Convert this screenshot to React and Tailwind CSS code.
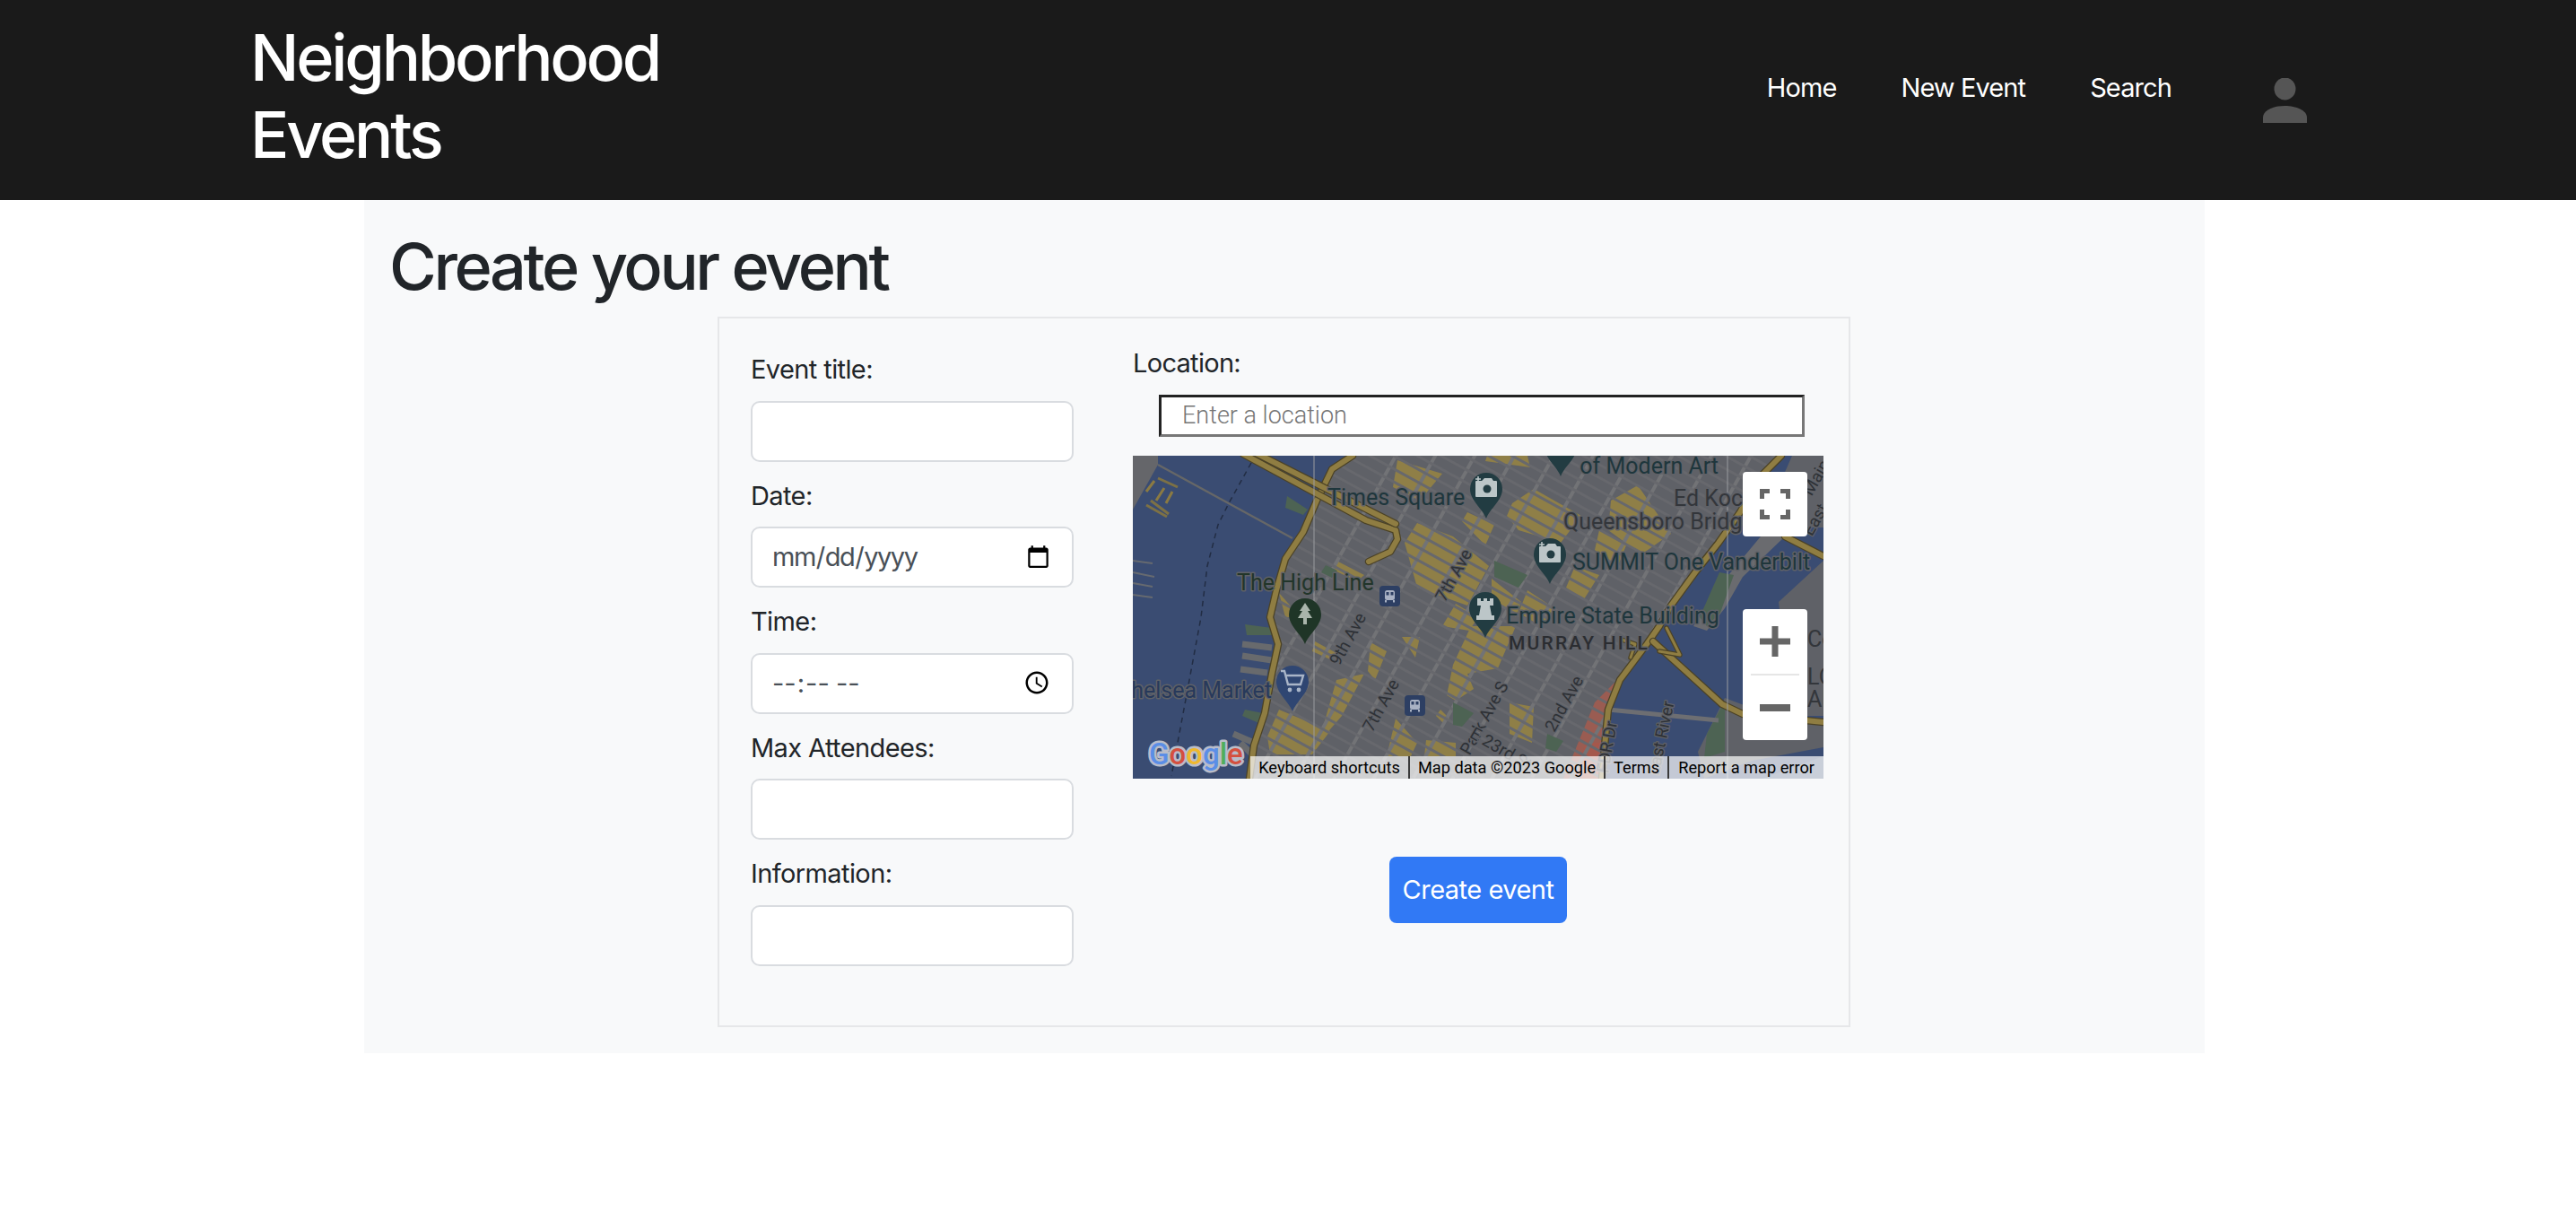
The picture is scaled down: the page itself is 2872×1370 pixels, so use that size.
import React from "react";

const land = "#5f6167";
const water = "#3a4c72";

const manhattan =
  "M245 0 L222 15 L205 50 L190 85 L170 115 L160 150 L153 180 L162 210 L155 243 L147 287 L135 323 L130 360 L520 360 L527 313 L530 283 L543 250 L573 210 L587 190 L600 167 L627 130 L653 97 L677 63 L700 23 L723 0 Z";

const yellowBlocks = [
  "303,97 317,75 357,90 397,123 373,167 317,147",
  "373,63 403,77 393,100 367,73",
  "447,37 500,67 477,97 430,83 417,67 423,53",
  "400,137 433,163 427,180 400,160",
  "393,6 443,13 440,0 395,0",
  "533,50 563,33 600,87 567,110 530,83",
  "520,83 550,100 540,125 515,105",
  "493,123 520,133 503,160 483,147",
  "357,233 377,190 427,190 407,237 373,243 380,260 360,273 350,267",
  "300,202 320,202 315,225",
  "265,208 283,218 270,250 262,240",
  "343,283 353,293 346,298 338,290",
  "293,293 317,320 310,335 283,335",
  "327,317 360,320 360,335 325,335",
  "420,275 447,280 445,320 420,310",
  "163,283 220,307 200,333 153,333 150,313",
  "203,207 227,220 222,228 200,218",
  "227,250 258,243 233,290 207,320",
  "227,117 258,133 250,140 225,128",
  "163,153 187,180 170,180",
  "295,5 345,20 320,50 290,35",
  "440,150 470,170 455,190 430,175",
  "345,190 360,165 385,180 375,195",
];

const greenPatches = [
  "172,45 195,60 190,66 170,58",
  "125,188 155,192 155,200 127,200",
  "125,283 150,288 145,300 122,290",
  "654,130 670,133 655,175 640,190 632,180",
  "660,273 640,310 637,337 660,330",
];

const parkPatches = [
  "403,117 440,133 430,147 403,135",
  "357,275 380,287 367,302 357,300",
  "462,310 480,318 472,330 460,326",
  "215,122 228,128 222,136 210,130",
];

const waterPiers = [
  [122, 210, 155, 214],
  [122, 223, 155, 228],
  [120, 238, 150, 242],
  [112, 310, 135, 320],
  [135, 335, 120, 320],
];

function Streets() {
  const lines = [];
  // avenues run up to the right, streets cross them
  for (let i = 0; i < 14; i++) {
    const x = 70 + i * 44;
    lines.push(<line key={"a" + i} x1={x} y1={400} x2={x + 240} y2={-30} stroke="#727376" strokeWidth="4" />);
  }
  for (let i = 0; i < 80; i++) {
    const y = -420 + i * 14.5;
    lines.push(<line key={"s" + i} x1={80} y1={y} x2={800} y2={y + 395} stroke="#67686d" strokeWidth="3" />);
  }
  return <g>{lines}</g>;
}

function Road({ d, w = 6 }) {
  return (
    <g fill="none" strokeLinejoin="round" strokeLinecap="round">
      <path d={d} stroke="#4b4226" strokeWidth={w + 2.5} />
      <path d={d} stroke="#8f7d42" strokeWidth={w} />
    </g>
  );
}

function Pin({ x, y, fill, children }) {
  return (
    <g transform={`translate(${x} ${y})`}>
      <path d="M0 33 C-4 22 -18 13 -18 0 A18 18 0 1 1 18 0 C18 13 4 22 0 33 Z" fill={fill} />
      {children}
    </g>
  );
}

function CameraGlyph() {
  return (
    <g>
      <path d="M-11 -9 H-5 L-2 -12 H6 L8 -9 H11 A1 1 0 0 1 12 -8 V8 A1 1 0 0 1 11 9 H-11 A1 1 0 0 1 -12 8 V-8 A1 1 0 0 1 -11 -9 Z" fill="#bcc6c8" />
      <circle cx="1" cy="0" r="4.5" fill="#223c42" />
      <path d="M-9 -14 V-8 M-12 -11 H-6" stroke="#bcc6c8" strokeWidth="1.6" />
    </g>
  );
}

function TransitBadge({ x, y }) {
  return (
    <g transform={`translate(${x} ${y})`}>
      <rect width="23" height="23" rx="4" fill="#2d3f63" />
      <rect x="6" y="5" width="11" height="11" rx="2.5" fill="#a9b2c4" />
      <rect x="7.5" y="7" width="3" height="3.5" fill="#2d3f63" />
      <rect x="12.5" y="7" width="3" height="3.5" fill="#2d3f63" />
      <path d="M7 16 V18.5 M16 16 V18.5" stroke="#a9b2c4" strokeWidth="2" />
    </g>
  );
}

function MapLabel({ x, y, children, fill = "#1e363c", size = 25, weight = 400, anchor = "start", spacing }) {
  return (
    <text
      x={x}
      y={y}
      fill={fill}
      fontSize={size}
      fontWeight={weight}
      fontFamily="Roboto, sans-serif"
      textAnchor={anchor}
      letterSpacing={spacing}
      stroke={land}
      strokeWidth="3"
      strokeLinejoin="round"
      paintOrder="stroke"
    >
      {children}
    </text>
  );
}

function RoadLabel({ x, y, angle, children, size = 19 }) {
  return (
    <text
      transform={`translate(${x} ${y}) rotate(${angle})`}
      fill="#2e3136"
      fontSize={size}
      fontFamily="Roboto, sans-serif"
      textAnchor="middle"
      dominantBaseline="middle"
      stroke={land}
      strokeWidth="2.5"
      strokeLinejoin="round"
      paintOrder="stroke"
    >
      {children}
    </text>
  );
}

function MapDrawing() {
  return (
    <svg className="block h-full w-full" viewBox="0 0 770 360">
      <defs>
        <clipPath id="island">
          <path d={manhattan} />
        </clipPath>
      </defs>
      <rect width="770" height="360" fill={water} />

      {/* far shore and the other islands */}
      <polygon points="0,0 28,0 28,10 0,60" fill="#65666a" />
      <polygon points="700,90 727,90 680,135 660,170 640,195 625,190 650,150" fill="#6a6b6f" />
      <polygon points="770,117 720,163 723,190 770,190" fill={land} />
      <polygon points="735,0 770,0 770,80 700,80" fill={land} />
      <polygon points="660,270 700,285 770,295 770,325 690,340 637,360 630,330" fill={land} />
      <polygon points="680,190 770,190 770,290 680,290" fill={land} />
      <polygon points="702,360 770,335 770,360" fill="#4c5f80" />
      {greenPatches.map((p) => (
        <polygon key={p} points={p} fill="#4d6353" />
      ))}
      {waterPiers.map(([x1, y1, x2, y2]) => (
        <line key={x1 + "-" + y1} x1={x1} y1={y1} x2={x2} y2={y2} stroke="#686a6d" strokeWidth="7" />
      ))}
      <path d="M28 25 L50 35 M20 50 L40 65 M15 55 L38 68" stroke="#7d7145" strokeWidth="3" />
      <path d="M15 40 L24 28 M26 50 L35 36 M37 53 L44 40" stroke="#8b7a42" strokeWidth="3" />
      <path d="M0 117 L22 120 M0 130 L24 135 M0 142 L22 146 M0 155 L22 158" stroke="#666a70" strokeWidth="2" />

      <line x1="28" y1="10" x2="178" y2="92" stroke="#666767" strokeWidth="2.5" />
      <path d="M132 8 L107 53 L95 77 L83 123 L76 180 L58 277 L43 357" fill="none" stroke="#222d44" strokeWidth="1.5" strokeDasharray="6 5" />
      <path d="M530 283 L653 295" stroke="#6d6e72" strokeWidth="5" />

      {/* Manhattan */}
      <path d={manhattan} fill={land} />
      <g clipPath="url(#island)">
        {yellowBlocks.map((p) => (
          <polygon key={p} points={p} fill="#8f7f47" />
        ))}
        <polygon points="515,275 540,250 520,360 480,360" fill="#9a5c52" />
        <polygon points="505,320 525,320 520,360 490,360" fill="#a5584c" />
        <Streets />
        {parkPatches.map((p) => (
          <polygon key={p} points={p} fill="#4d6353" />
        ))}
      </g>

      {/* highways */}
      <Road d="M245 0 L222 15 L205 50 L190 85 L170 115 L160 150 L153 180 L162 210 L155 243 L147 287 L135 323 L130 360" />
      <Road d="M723 0 L700 23 L677 63 L653 97 L627 130 L600 167 L587 190 L573 210 L543 250 L530 283 L527 313 L523 360" />
      <Road d="M123 -2 L260 72 L293 83 L295 93 L287 107 L263 118" w={6} />
      <Road d="M135 -4 L293 76" w={6} />
      <Road d="M580 207 L657 277 L680 288 L770 297" />
      <Road d="M727 90 L770 112" />
      <Road d="M545 205 L560 210 L555 225 M587 218 L610 222 L595 192" w={3} />

      {/* thin seams in the tiles */}
      <line x1="202" y1="0" x2="202" y2="360" stroke="#9a9ca0" strokeWidth="1" />
      <line x1="663" y1="0" x2="663" y2="360" stroke="#9a9ca0" strokeWidth="1" />

      <MapLabel x={217} y={55}>Times Square</MapLabel>
      <MapLabel x={653} y={20} anchor="end">of Modern Art</MapLabel>
      <MapLabel x={603} y={56} fill="#33363b">Ed Koch</MapLabel>
      <MapLabel x={480} y={82} fill="#33363b">Queensboro Bridge</MapLabel>
      <MapLabel x={490} y={127}>SUMMIT One Vanderbilt</MapLabel>
      <MapLabel x={116} y={150} fill="#22352a">The High Line</MapLabel>
      <MapLabel x={416} y={187}>Empire State Building</MapLabel>
      <MapLabel x={419} y={216} fill="#2b2d31" size={21} weight={500} spacing="2.2">MURRAY HILL</MapLabel>
      <MapLabel x={155} y={270} fill="#27395b" anchor="end">Chelsea Market</MapLabel>

      <RoadLabel x={241} y={205} angle={-61}>9th Ave</RoadLabel>
      <RoadLabel x={359} y={134} angle={-61}>7th Ave</RoadLabel>
      <RoadLabel x={278} y={279} angle={-61}>7th Ave</RoadLabel>
      <RoadLabel x={393} y={293} angle={-61}>Park Ave S</RoadLabel>
      <RoadLabel x={482} y={277} angle={-61}>2nd Ave</RoadLabel>
      <RoadLabel x={410} y={328} angle={30}>E 23rd St</RoadLabel>
      <RoadLabel x={530} y={325} angle={-80}>FDR Dr</RoadLabel>
      <RoadLabel x={590} y={315} angle={-78}>East River</RoadLabel>
      <RoadLabel x={763} y={25} angle={-60}>Main</RoadLabel>
      <RoadLabel x={762} y={72} angle={-60}>East</RoadLabel>
      <MapLabel x={752} y={213} fill="#33363b">Co</MapLabel>
      <MapLabel x={752} y={255} fill="#33363b">LO</MapLabel>
      <MapLabel x={752} y={280} fill="#33363b">AM</MapLabel>

      <Pin x={394} y={37} fill="#223c42"><CameraGlyph /></Pin>
      <Pin x={465} y={110} fill="#223c42"><CameraGlyph /></Pin>
      <Pin x={477} y={-10} fill="#223c42" />
      <Pin x={393} y={170} fill="#223c42">
        <path d="M-9 -11 H-5 V-8 H-2 V-11 H2 V-8 H5 V-11 H9 V-3 H5 L7 8 H10 V13 H-10 V8 H-7 L-5 -3 H-9 Z" fill="#bcc6c8" />
      </Pin>
      <Pin x={192} y={177} fill="#1f3527">
        <path d="M0 -13 L6 -4 H3 L8 4 H2 V11 H-2 V4 H-8 L-3 -4 H-6 Z" fill="#a9b5ab" />
      </Pin>
      <Pin x={178} y={252} fill="#2f4672">
        <path d="M-13 -12 H-9 L-5 3 H9 L12 -7 H-7" fill="none" stroke="#a9b5c8" strokeWidth="2.4" />
        <circle cx="-3" cy="9" r="2.4" fill="#a9b5c8" />
        <circle cx="7" cy="9" r="2.4" fill="#a9b5c8" />
      </Pin>
      <TransitBadge x={275} y={145} />
      <TransitBadge x={303} y={267} />

      {/* Google logo */}
      <text
        x="18"
        y="344"
        fontFamily="Roboto, sans-serif"
        fontSize="33"
        fontWeight="500"
        stroke="#b9bdc9"
        strokeWidth="5"
        strokeLinejoin="round"
        paintOrder="stroke"
      >
        <tspan fill="#5b8ee6">G</tspan>
        <tspan fill="#d4503f">o</tspan>
        <tspan fill="#efb82e">o</tspan>
        <tspan fill="#5b8ee6">g</tspan>
        <tspan fill="#4fae5c">l</tspan>
        <tspan fill="#d4503f">e</tspan>
      </text>
    </svg>
  );
}

function Field({ label, type = "text", tracking = "" }) {
  return (
    <div className="mb-4 flex flex-col">
      <label className="leading-[43.5px] tracking-[-0.6px]">{label}</label>
      <input
        type={type}
        className={
          "mt-[13px] h-[68px] w-[360px] rounded-[10px] border-2 border-[#d9dce0] bg-white px-[21px] text-[29px] text-[#495057] " +
          tracking
        }
      />
    </div>
  );
}

function MapControls() {
  return (
    <>
      <button type="button" className="absolute top-[18px] right-[18px] grid h-[72px] w-[72px] place-items-center rounded-[4px] bg-white">
        <svg width="34" height="34" viewBox="0 0 34 34" fill="none" stroke="#666" strokeWidth="5">
          <path d="M2.5 11 V2.5 H11 M23 2.5 H31.5 V11 M31.5 23 V31.5 H23 M11 31.5 H2.5 V23" />
        </svg>
      </button>
      <div className="absolute top-[171px] right-[18px] flex w-[72px] flex-col items-center rounded-[4px] bg-white">
        <button type="button" className="grid h-[72px] w-full place-items-center">
          <svg width="34" height="34" viewBox="0 0 34 34" fill="#666">
            <path d="M13.5 0 H20.5 V13.5 H34 V20.5 H20.5 V34 H13.5 V20.5 H0 V13.5 H13.5 Z" />
          </svg>
        </button>
        <div className="h-[2px] w-[54px] bg-[#e6e6e6]" />
        <button type="button" className="grid h-[72px] w-full place-items-center">
          <svg width="34" height="8" viewBox="0 0 34 8" fill="#666">
            <rect width="34" height="8" />
          </svg>
        </button>
      </div>
      <div className="absolute right-0 bottom-0 flex h-[25px] items-center bg-[#ffffffb3] font-['Roboto'] text-[18.2px] leading-[25px] text-black">
        <span className="h-full border-r-2 border-[#3a3a3a] px-[9px]">Keyboard shortcuts</span>
        <span className="h-full border-r-2 border-[#3a3a3a] px-[9px]">Map data ©2023 Google</span>
        <span className="h-full border-r-2 border-[#3a3a3a] px-[9px]">Terms</span>
        <span className="h-full px-[10px]">Report a map error</span>
      </div>
    </>
  );
}

export default function App() {
  return (
    <div className="min-h-screen bg-white font-['Inter',sans-serif] text-[29px] text-[#212529]">
      <header className="flex h-[223px] items-start bg-[#1a1a1a] pr-[300px] pl-[279px] text-white">
        <h1 className="mt-[21px] text-[72px] leading-[86px] font-medium tracking-[-3.2px]">
          Neighborhood
          <br />
          Events
        </h1>
        <nav className="mt-[76px] ml-auto flex gap-[72px] leading-[43.5px] tracking-[-0.9px]">
          <a href="#home">Home</a>
          <a href="#new">New Event</a>
          <a href="#search">Search</a>
        </nav>
        <svg className="mt-[87px] ml-[102px]" width="49" height="50" viewBox="0 0 49 50" fill="#555">
          <ellipse cx="24.5" cy="12" rx="12" ry="12.5" />
          <path d="M0 50 V44 C0 36 12 31 24.5 31 C37 31 49 36 49 44 V50 Z" />
        </svg>
      </header>

      <main className="mr-[414px] ml-[406px] h-[951px] bg-[#f8f9fa] pt-[31px] pr-[29px] pl-[28px]">
        <h2 className="text-[72px] leading-[86px] font-medium tracking-[-3.4px]">Create your event</h2>
        <form className="mt-[13px] ml-[366px] flex h-[792px] w-[1263px] items-start border-2 border-[#e6e7e9] pl-[35px]">
          <div className="pt-[35px]">
            <Field label="Event title:" />
            <Field label="Date:" type="date" tracking="tracking-[-1.5px]" />
            <Field label="Time:" type="time" />
            <Field label="Max Attendees:" />
            <Field label="Information:" />
          </div>
          <div className="ml-[66px] flex w-[770px] flex-col pt-[28px]">
            <label className="leading-[43.5px] tracking-[-0.7px]">Location:</label>
            <input
              type="text"
              placeholder="Enter a location"
              className="mt-[13px] ml-[29px] h-[47px] w-[720px] border-[3px] border-t-[#222] border-r-[#777] border-b-[#777] border-l-[#222] bg-white pl-[23px] font-['Roboto'] text-[27px] font-light placeholder:text-[#757575]"
            />
            <div className="relative mt-[21px] h-[360px] w-[770px] overflow-hidden">
              <MapDrawing />
              <MapControls />
            </div>
            <button
              type="button"
              className="mx-auto mt-[87px] h-[74px] w-[198px] rounded-[8px] bg-[#3179f5] tracking-[-0.5px] text-white"
            >
              Create event
            </button>
          </div>
        </form>
      </main>
    </div>
  );
}
